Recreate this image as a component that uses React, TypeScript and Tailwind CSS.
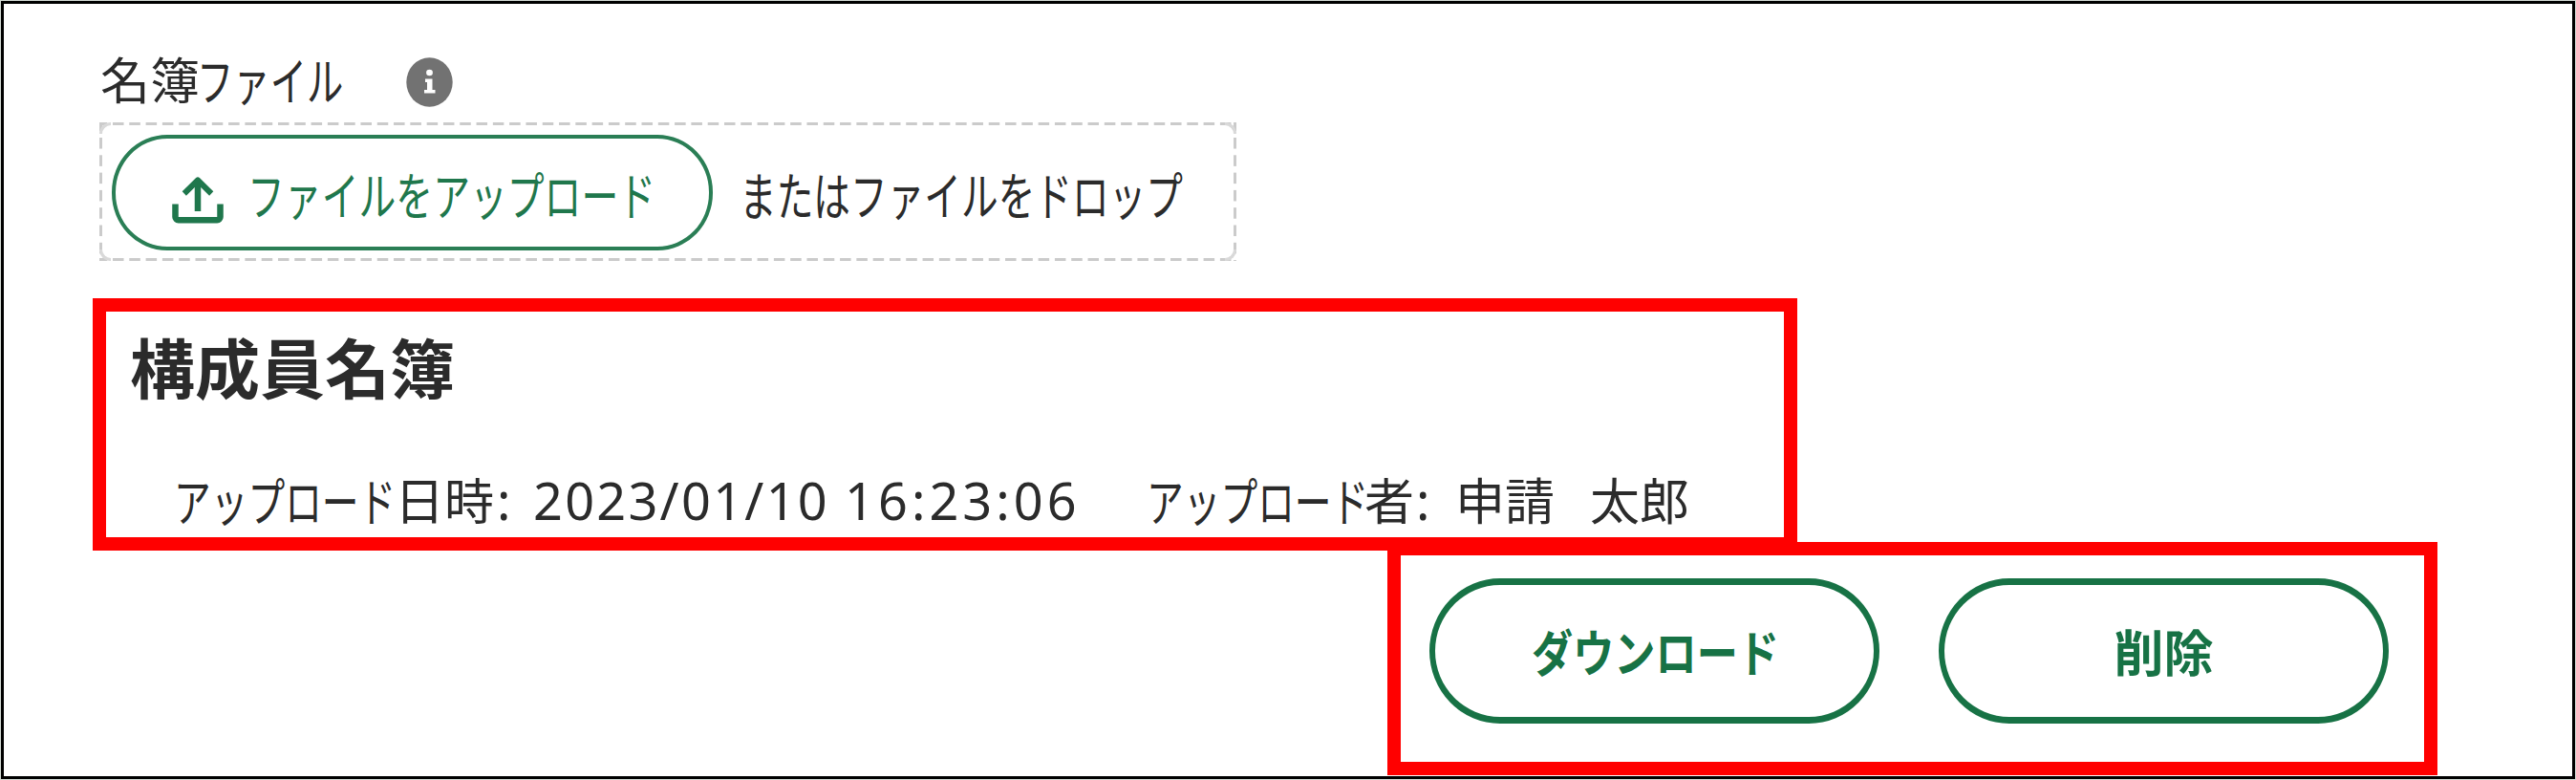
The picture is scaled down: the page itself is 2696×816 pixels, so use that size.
import React from 'react';

type TextProps = { children: React.ReactNode; className: string };

// Condensed run of Japanese text. The width reserves the space, the scale narrows the glyphs.
function Run({ children, className }: TextProps) {
  return <span className={`block shrink-0 origin-left whitespace-pre leading-none ${className}`}>{children}</span>;
}

function InfoIcon() {
  return (
    <svg className="h-[52px] w-[49px]" viewBox="0 0 49 52" aria-hidden="true">
      <ellipse cx="24.5" cy="26" rx="24.2" ry="25.8" fill="#727272" />
      <ellipse cx="24.5" cy="16" rx="3.4" ry="3.2" fill="#fff" />
      <path d="M20 22.5h7.5v11.5h3v3.5H19v-3.5h3v-8h-2z" fill="#fff" />
    </svg>
  );
}

function UploadIcon() {
  return (
    <svg className="h-[49px] w-[54px]" viewBox="0 0 54 49" fill="none" stroke="#1f774c" aria-hidden="true">
      <path d="M3.5 28.5V42a3.2 3.2 0 0 0 3.2 3.2h40.6a3.2 3.2 0 0 0 3.2-3.2V28.5" strokeWidth="6.5" />
      <path d="M27 36V5" strokeWidth="6.5" />
      <path d="M12.8 17.5 27 3.5l14.2 14" strokeWidth="6" strokeLinejoin="round" />
    </svg>
  );
}

function ActionButton({ children }: { children: React.ReactNode }) {
  return (
    <button className="flex h-[152px] w-[471px] shrink-0 items-center justify-center rounded-[74px/76px] border-x-[6px] border-y-[7px] border-[#177245] font-bold text-[#177245]">
      {children}
    </button>
  );
}

export default function App() {
  return (
    <div className="h-[816px] w-[2696px] overflow-hidden bg-[#d3dad5] p-px font-['Noto_Sans_CJK_JP',sans-serif] text-[#2b2b2b]">
      <main className="h-[814px] w-[2694px] border-[3px] border-black bg-white">
        {/* Field label */}
        <div className="flex h-[124px] pl-[101px] pt-[52px]">
          <Run className="w-[101px] text-[52px]">名簿</Run>
          <Run className="w-[219px] scale-x-[0.71] text-[54px]">ファイル</Run>
          <div className="pt-1">
            <InfoIcon />
          </div>
        </div>

        {/* Drop zone */}
        <div className="relative ml-[100px] h-[145px] w-[1190px] bg-[linear-gradient(90deg,#cbcbcb_66%,transparent_0),linear-gradient(90deg,#cbcbcb_66%,transparent_0),linear-gradient(#cbcbcb_62%,transparent_0),linear-gradient(#cbcbcb_62%,transparent_0)] [background-position:14px_0,14px_100%,0_16px,100%_16px] [background-repeat:repeat-x,repeat-x,repeat-y,repeat-y] [background-size:17.3px_3px,17.3px_3px,3px_18.3px,3px_18.3px] px-[13px] pt-[13px]">
          <span className="absolute left-0 top-0 size-3 rounded-tl-xl border-l-[3px] border-t-[3px] border-[#d9d9d9] bg-white" />
          <span className="absolute right-0 top-0 size-3 rounded-tr-xl border-r-[3px] border-t-[3px] border-[#d9d9d9] bg-white" />
          <span className="absolute bottom-0 left-0 size-3 rounded-bl-xl border-b-[3px] border-l-[3px] border-[#d9d9d9] bg-white" />
          <span className="absolute bottom-0 right-0 size-3 rounded-br-xl border-b-[3px] border-r-[3px] border-[#d9d9d9] bg-white" />
          <div className="flex items-center">
            <button className="flex h-[121px] w-[629px] shrink-0 items-center rounded-[58px/60px] border-4 border-[#2a7e55] pl-[59px] text-[#1f774c]">
              <span className="mt-[15px]">
                <UploadIcon />
              </span>
              <Run className="ml-[25px] mt-0.5 w-[424px] scale-x-[0.719] text-[54px]">ファイルをアップロード</Run>
            </button>
            <Run className="ml-[28px] mt-0.5 w-[460px] scale-x-[0.716] text-[54px]">またはファイルをドロップ</Run>
          </div>
        </div>

        {/* Uploaded file */}
        <section className="ml-[93px] mt-[39px] h-[264px] w-[1784px] border-[14px] border-[#ff0000] pl-[25px] pt-[23px]">
          <h2 className="flex">
            <Run className="text-[68px] font-bold">構成員名簿</Run>
          </h2>
          <div className="flex pl-[46px] pt-[79px]">
            <Run className="w-[231px] scale-x-[0.717] text-[54px]">アップロード</Run>
            <Run className="w-[107px] text-[52px]">日時</Run>
            <Run className="w-[38px] font-['Noto_Sans'] text-[54px]">:</Run>
            <Run className="w-[326px] font-['Noto_Sans'] text-[54px] tracking-[0.042em]">2023/01/10 </Run>
            <Run className="w-[316px] font-['Noto_Sans'] text-[54px] tracking-[0.075em]">16:23:06</Run>
            <Run className="w-[228px] scale-x-[0.717] text-[54px]">アップロード</Run>
            <Run className="w-[54px] text-[52px]">者</Run>
            <Run className="w-[41px] font-['Noto_Sans'] text-[54px]">:</Run>
            <Run className="w-[141px] text-[52px]">申請</Run>
            <Run className="text-[52px]">太郎</Run>
          </div>
        </section>

        {/* File actions */}
        <section className="relative -mt-[9px] ml-[1448px] flex h-[244px] w-[1099px] gap-[62px] border-[14px] border-[#ff0000] pl-[30px] pt-[24px]">
          <ActionButton>
            <Run className="w-[258px] scale-x-[0.83] text-[52px]">ダウンロード</Run>
          </ActionButton>
          <ActionButton>
            <Run className="text-[52px]">削除</Run>
          </ActionButton>
        </section>
      </main>
    </div>
  );
}
